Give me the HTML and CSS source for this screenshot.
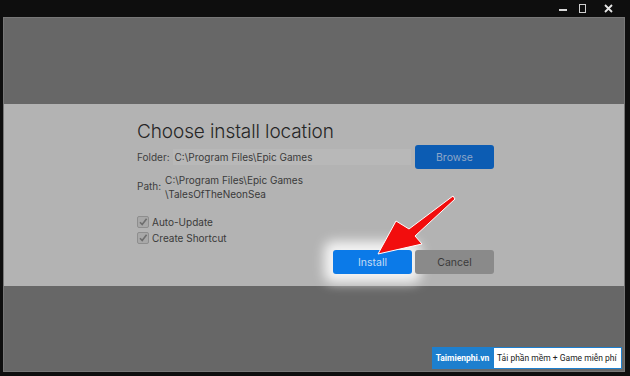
FILE: index.html
```html
<!DOCTYPE html>
<html lang="en">
<head>
    <meta charset="UTF-8">
    <meta name="viewport" content="width=device-width, initial-scale=1.0">
    <title>Choose install location</title>
    <link rel="stylesheet" href="styles.css">
</head>
<body>
    <div class="window">
        <div class="titlebar">
            <span class="ctl ctl-min"></span>
            <span class="ctl ctl-max"></span>
            <span class="ctl ctl-close">
                <svg width="9" height="9" viewBox="0 0 9 9"><path d="M1 1L8 8M8 1L1 8" stroke="#e6e6e6" stroke-width="1.8"/></svg>
            </span>
        </div>

        <div class="content">
            <div class="band">
                <div class="dialog">
                    <h1>Choose install location</h1>

                    <div class="row folder-row">
                        <span class="label">Folder:</span>
                        <div class="field">C:\Program Files\Epic Games</div>
                        <button class="btn btn-browse">Browse</button>
                    </div>

                    <div class="row path-row">
                        <span class="label">Path:</span>
                        <div class="path">C:\Program Files\Epic Games<br>\TalesOfTheNeonSea</div>
                    </div>

                    <div class="bottom">
                        <div class="checks">
                            <label class="check"><span class="box"><svg width="10" height="10" viewBox="0 0 10 10"><path d="M2 5.2L4.2 7.6L8.6 1.8" fill="none" stroke="#6e6e6e" stroke-width="1.6"/></svg></span>Auto-Update</label>
                            <label class="check"><span class="box"><svg width="10" height="10" viewBox="0 0 10 10"><path d="M2 5.2L4.2 7.6L8.6 1.8" fill="none" stroke="#6e6e6e" stroke-width="1.6"/></svg></span>Create Shortcut</label>
                        </div>
                        <div class="actions">
                            <button class="btn btn-install">Install</button>
                            <button class="btn btn-cancel">Cancel</button>
                        </div>
                    </div>
                </div>
            </div>
        </div>

        <!-- red pointer over the install button -->
        <svg class="arrow" width="630" height="376" viewBox="0 0 630 376">
            <polygon points="453,196 409,229 396,221 378,254 422,244 415,236 455,199" fill="#f20d0d" stroke="#ffffff" stroke-width="1" stroke-linejoin="round"/>
        </svg>

        <div class="watermark">
            <span class="wm-brand">Taimienphi.vn</span>
            <span class="wm-text">Tải phần mềm + Game miễn phí</span>
        </div>
    </div>
</body>
</html>
```

FILE: styles.css
```css
body { margin: 0; background: #0e0e0e; font-family: Inter, "Liberation Sans", Arial, sans-serif; }
.window { position: relative; width: 630px; height: 376px; display: flex; flex-direction: column; background: #0e0e0e; overflow: hidden; }

.titlebar { height: 17px; display: flex; justify-content: flex-end; align-items: center; padding-right: 17px; gap: 9px; }
.ctl { display: flex; align-items: center; justify-content: center; width: 10px; height: 10px; }
.ctl-min::before { content: ""; width: 8px; height: 2px; background: #d8d8d8; margin-top: 2px; }
.ctl-max::before { content: ""; width: 5px; height: 7px; border: 1px solid #cfcfcf; }
.ctl-close { margin-left: 7px; }

.content { flex: 1; margin: 0 5px 4px 3px; background: #676767; border: 1px solid #777; display: flex; flex-direction: column; padding-top: 86px; }
.band { height: 182px; background: #b3b3b3; display: flex; justify-content: center; }
.dialog { width: 357px; margin-left: 3px; padding-top: 16px; color: #3a3a3a; font-size: 10px; }

h1 { margin: 0 0 2px; font-size: 19px; font-weight: 300; color: #262626; letter-spacing: -0.1px; }

.row { display: flex; align-items: center; }
.label { color: #3e3e3e; }
.field { width: 236px; margin-left: 3px; height: 16px; line-height: 16px; padding-left: 2px; background: #b8b8b8; color: #3a3a3a; }
.folder-row { height: 24px; }

.btn { border: none; border-radius: 3px; font-family: inherit; font-size: 10.5px; height: 24px; width: 79px; padding: 0; }
.btn-browse { margin-left: auto; background: #0c5cb3; color: #8ea6c8; }

.path-row { margin-top: 4px; align-items: flex-start; }
.path-row .label { margin-top: 7px; }
.path { margin-left: 4px; line-height: 14px; }

.bottom { display: flex; justify-content: space-between; margin-top: 12px; }
.checks { display: flex; flex-direction: column; gap: 4px; padding-top: 3px; }
.check { display: flex; align-items: center; gap: 3px; color: #3a3a3a; }
.box { width: 10px; height: 10px; border: 1px solid #8e8e8e; border-radius: 2px; background: #a8a8a8; display: flex; align-items: center; justify-content: center; }

.actions { display: flex; gap: 3px; padding-top: 37px; }
.btn-install { background: #0b7ae8; color: #c4dcf4; box-shadow: 0 0 12px 9px rgba(255,255,255,0.85); }
.btn-cancel { background: #8a8a8a; color: #3a3a3a; }

.arrow { position: absolute; left: 0; top: 0; pointer-events: none; }

.watermark { position: absolute; left: 432px; top: 347px; width: 190px; height: 22px; display: flex; white-space: nowrap; font-family: Roboto, "Liberation Sans", sans-serif; font-size: 8.5px; }
.wm-brand { width: 61px; background: #1d7fce; color: #fff; font-weight: 700; display: flex; align-items: center; justify-content: center; }
.wm-text { flex: 1; background: #fff; color: #222; border: 1px solid #1d7fce; display: flex; align-items: center; padding-left: 3px; }
```
